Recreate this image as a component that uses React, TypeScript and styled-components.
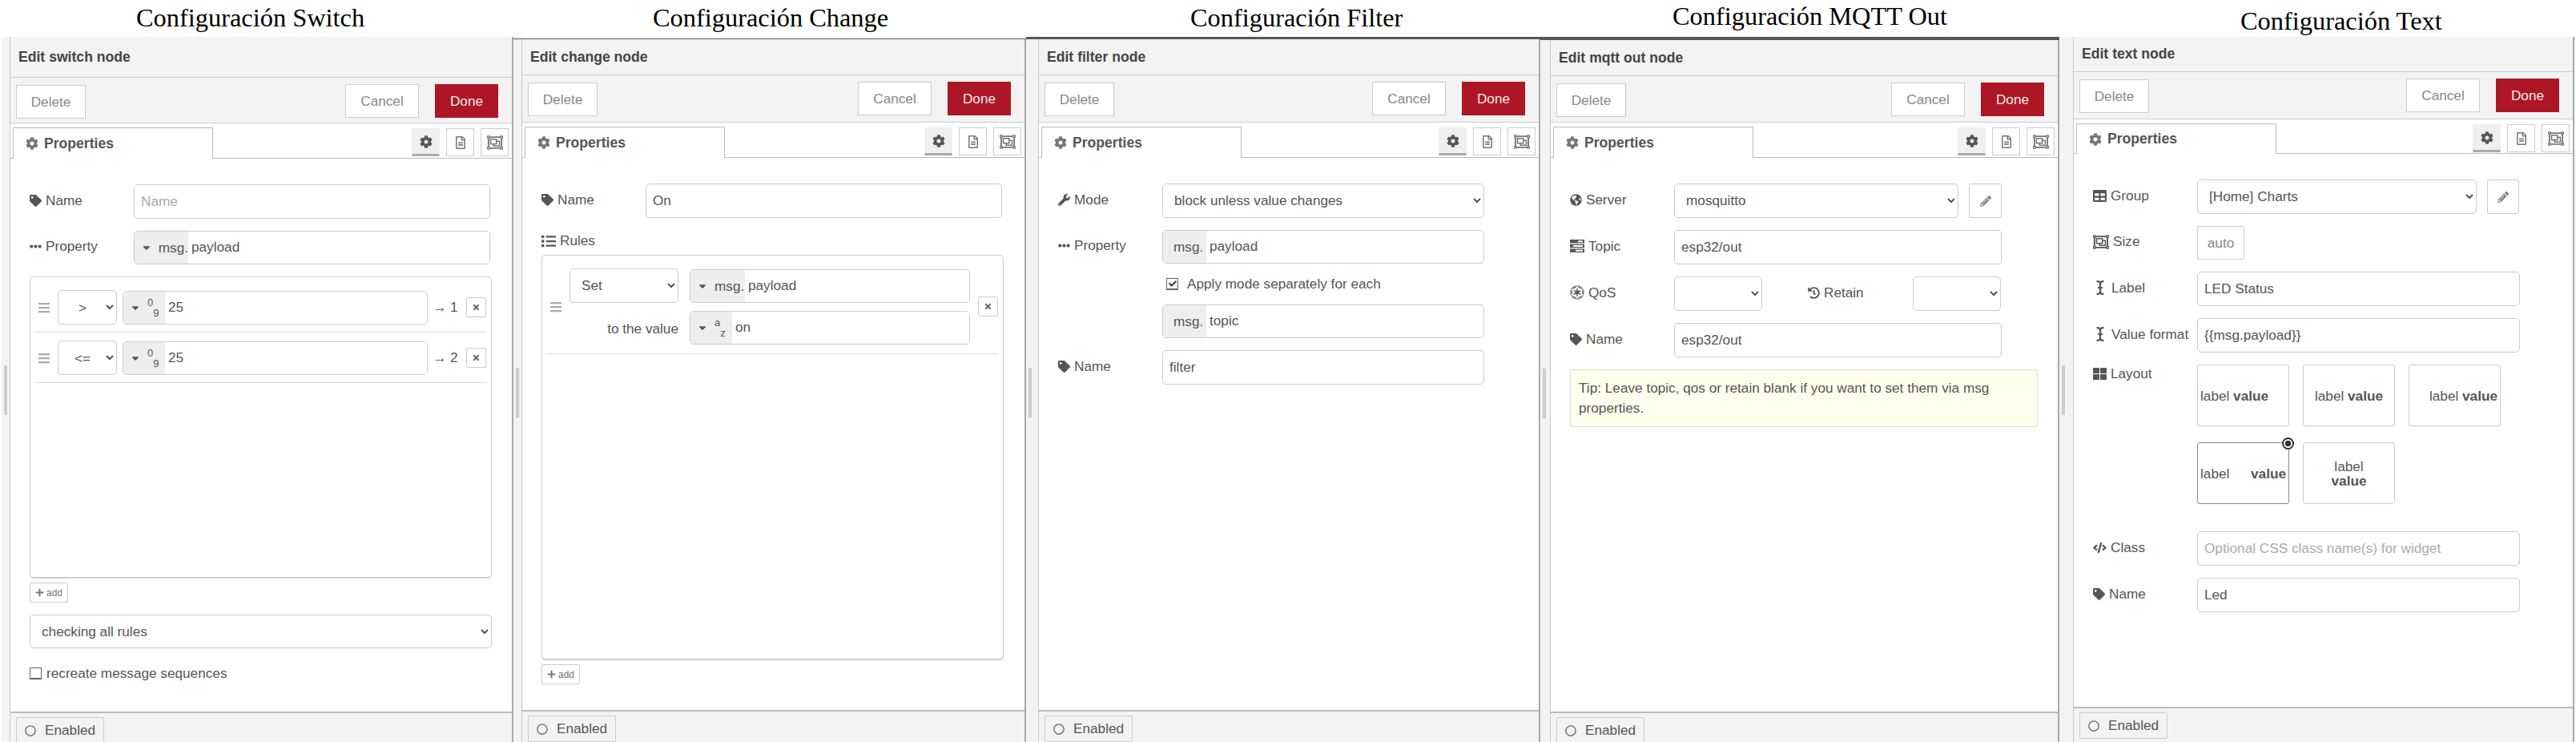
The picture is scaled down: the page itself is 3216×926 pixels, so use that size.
import React from 'react'
import styled, { createGlobalStyle } from 'styled-components'
import {
    FaBars, FaCaretDown, FaCheck, FaCode, FaCog, FaEllipsisH, FaEmpire, FaGlobeAmericas, FaHistory,
    FaICursor, FaList, FaPencilAlt, FaPlus, FaRegCircle, FaRegFileAlt, FaRegObjectGroup, FaTable,
    FaTag, FaThLarge, FaTimes, FaWrench,
} from 'react-icons/fa'

const GlobalStyle = createGlobalStyle`
    html, body {
        margin: 0;
        background: #fff;
        font-family: "Liberation Sans", Arial, sans-serif;
        font-size: 17.2px;
        color: #555;
    }
`

const TasksIcon = () => (
    <svg width="18" height="16" viewBox="0 0 18 16" fill="#555">
        <path d="M0 0h18v4.4H0zM10 1.2v2h6v-2zM0 5.8h18v4.4H0zM4 7v2h12V7zM0 11.6h18V16H0zM7 12.8v2h9v-2z" fillRule="evenodd" />
    </svg>
)

type DialogProps = {
    width: number
    strip: number
    stripWhite?: number
    title: string
    titleLeft: number
    titleTop: number
    titleHeight: number
    line?: number
    node: string
    headerH: number
    toolbarH: number
    tabsH: number
    footerH: number
    children: React.ReactNode
}

const Dialog = ({ width, strip, stripWhite, title, titleLeft, titleTop, titleHeight, line, node, headerH, toolbarH, tabsH, footerH, children }: DialogProps) => (
    <Column $width={width}>
        <TitleBar $height={titleHeight} $line={line || 0} $left={titleLeft} $top={titleTop}>
            <Title>{title}</Title>
        </TitleBar>
        <Window>
            <Strip $width={strip} $white={stripWhite || 0}><Thumb /></Strip>
            <Panel>
                <Header $height={headerH}>Edit {node} node</Header>
                <Toolbar $height={toolbarH}>
                    <DeleteButton>Delete</DeleteButton>
                    <Spacer />
                    <CancelButton>Cancel</CancelButton>
                    <DoneButton>Done</DoneButton>
                </Toolbar>
                <Tabs $height={tabsH}>
                    <Tab><FaCog color="#777" size={16} /> Properties</Tab>
                    <Spacer />
                    <TabIcon $active><FaCog size={16} color="#555" /></TabIcon>
                    <TabIcon><FaRegFileAlt size={16} color="#777" /></TabIcon>
                    <TabIcon><FaRegObjectGroup size={20} color="#777" /></TabIcon>
                </Tabs>
                <Body>{children}</Body>
                <Footer $height={footerH}>
                    <EnabledButton><FaRegCircle size={14} color="#666" /> Enabled</EnabledButton>
                </Footer>
            </Panel>
        </Window>
    </Column>
)

const SwitchRule = ({ op, last }: { op: string; last: number }) => (
    <RuleItem>
        <Handle><FaBars size={16} /></Handle>
        <OpSelect defaultValue={op}><option>{op}</option></OpSelect>
        <Typed $width={381}>
            <TypePrefix $width={52}>
                <FaCaretDown size={14} />
                <TypeGlyph><i>0</i><b>9</b></TypeGlyph>
            </TypePrefix>
            <TypedInput defaultValue="25" />
        </Typed>
        <Output>→ {last}</Output>
        <Spacer />
        <RemoveButton><FaTimes size={11} /></RemoveButton>
    </RuleItem>
)

const MsgTyped = ({ value, caret, width, prefix }: { value: string; caret?: boolean; width?: number; prefix?: number }) => (
    <Typed $width={width || 0}>
        <TypePrefix $width={prefix || 67} $plain={!caret}>
            {caret && <FaCaretDown size={14} />}
            <span>msg.</span>
        </TypePrefix>
        <TypedInput defaultValue={value} />
    </Typed>
)

const App = () => (
    <Page>
        <GlobalStyle />
        <Dialog width={641} strip={12} stripWhite={2} title="Configuración Switch" titleLeft={170} titleTop={3} titleHeight={46} node="switch" headerH={51} toolbarH={57} tabsH={44} footerH={38}>
            <FormRow>
                <Label><FaTag size={15} /> Name</Label>
                <TextInput placeholder="Name" $width={445} />
            </FormRow>
            <FormRow>
                <Label><FaEllipsisH size={15} /> Property</Label>
                <MsgTyped value="payload" caret width={445} />
            </FormRow>
            <RuleBox $height={377}>
                <SwitchRule op=">" last={1} />
                <SwitchRule op="<=" last={2} />
            </RuleBox>
            <AddButton><FaPlus size={11} /> add</AddButton>
            <WideSelect defaultValue="checking all rules"><option>checking all rules</option></WideSelect>
            <CheckRow $margin={21}>
                <CheckBox />
                recreate message sequences
            </CheckRow>
        </Dialog>

        <Dialog width={640} strip={10} title="Configuración Change" titleLeft={174} titleTop={3} titleHeight={48} line={1} node="change" headerH={45} toolbarH={59} tabsH={44} footerH={40}>
            <FormRow>
                <Label><FaTag size={15} /> Name</Label>
                <TextInput defaultValue="On" $width={445} />
            </FormRow>
            <RulesLabel><FaList size={18} /> Rules</RulesLabel>
            <RuleBox $height={506}>
                <ChangeItem>
                    <Handle><FaBars size={16} /></Handle>
                    <ChangeFields>
                        <ChangeLine>
                            <FieldSelect $width={136} defaultValue="Set"><option>Set</option></FieldSelect>
                            <MsgTyped value="payload" caret width={350} prefix={68} />
                        </ChangeLine>
                        <ChangeLine>
                            <ToValue>to the value</ToValue>
                            <Typed $width={350}>
                                <TypePrefix $width={52}>
                                    <FaCaretDown size={14} />
                                    <TypeGlyph><i>a</i><b>z</b></TypeGlyph>
                                </TypePrefix>
                                <TypedInput defaultValue="on" />
                            </Typed>
                        </ChangeLine>
                    </ChangeFields>
                    <Spacer />
                    <RemoveButton><FaTimes size={11} /></RemoveButton>
                </ChangeItem>
            </RuleBox>
            <AddButton><FaPlus size={11} /> add</AddButton>
        </Dialog>

        <Dialog width={642} strip={15} title="Configuración Filter" titleLeft={205} titleTop={3} titleHeight={46} line={3} node="filter" headerH={45} toolbarH={59} tabsH={44} footerH={40}>
            <FormRow>
                <Label><FaWrench size={15} /> Mode</Label>
                <FieldSelect $width={402} defaultValue="block unless value changes"><option>block unless value changes</option></FieldSelect>
            </FormRow>
            <FormRow>
                <Label><FaEllipsisH size={15} /> Property</Label>
                <MsgTyped value="payload" width={402} prefix={54} />
            </FormRow>
            <CheckRow $margin={5} $indent={135}>
                <CheckBox $checked><FaCheck size={10} color="#333" /></CheckBox>
                Apply mode separately for each
            </CheckRow>
            <FormRow $top={15}>
                <Label />
                <MsgTyped value="topic" width={402} prefix={54} />
            </FormRow>
            <FormRow>
                <Label><FaTag size={15} /> Name</Label>
                <TextInput defaultValue="filter" $width={402} />
            </FormRow>
        </Dialog>

        <Dialog width={648} strip={12} title="Configuración MQTT Out" titleLeft={165} titleTop={1} titleHeight={46} line={4} node="mqtt out" headerH={45} toolbarH={58} tabsH={44} footerH={38}>
            <FormRow>
                <Label><FaGlobeAmericas size={15} /> Server</Label>
                <FieldSelect $width={355} defaultValue="mosquitto"><option>mosquitto</option></FieldSelect>
                <PencilButton $width={41}><FaPencilAlt size={14} /></PencilButton>
            </FormRow>
            <FormRow>
                <Label><TasksIcon /> Topic</Label>
                <TextInput defaultValue="esp32/out" $width={409} />
            </FormRow>
            <FormRow>
                <Label><FaEmpire size={18} /> QoS</Label>
                <FieldSelect $width={110}><option></option></FieldSelect>
                <RetainLabel><FaHistory size={15} /> Retain</RetainLabel>
                <FieldSelect $width={110}><option></option></FieldSelect>
            </FormRow>
            <FormRow>
                <Label><FaTag size={15} /> Name</Label>
                <TextInput defaultValue="esp32/out" $width={409} />
            </FormRow>
            <Tip>Tip: Leave topic, qos or retain blank if you want to set them via msg properties.</Tip>
        </Dialog>

        <Dialog width={643} strip={17} title="Configuración Text" titleLeft={226} titleTop={7} titleHeight={46} node="text" headerH={44} toolbarH={59} tabsH={43} footerH={44}>
            <FormRow>
                <Label><FaTable size={17} /> Group</Label>
                <FieldSelect $width={349} defaultValue="[Home] Charts"><option>[Home] Charts</option></FieldSelect>
                <PencilButton $width={40}><FaPencilAlt size={14} /></PencilButton>
            </FormRow>
            <FormRow>
                <Label><FaRegObjectGroup size={20} /> Size</Label>
                <SizeButton>auto</SizeButton>
            </FormRow>
            <FormRow>
                <Label><FaICursor size={18} /> Label</Label>
                <TextInput defaultValue="LED Status" $width={403} />
            </FormRow>
            <FormRow>
                <Label><FaICursor size={18} /> Value format</Label>
                <TextInput defaultValue="{{msg.payload}}" $width={403} />
            </FormRow>
            <LayoutRow>
                <LayoutLabel><FaThLarge size={17} /> Layout</LayoutLabel>
                <LayoutGrid>
                    <LayoutOption $justify="flex-start">label&nbsp;<strong>value</strong></LayoutOption>
                    <LayoutOption $justify="center">label&nbsp;<strong>value</strong></LayoutOption>
                    <LayoutOption $justify="flex-end">label&nbsp;<strong>value</strong></LayoutOption>
                    <LayoutOption $justify="space-between" $selected>
                        <span>label</span><strong>value</strong>
                        <RadioMark />
                    </LayoutOption>
                    <LayoutOption $justify="center" $stack><span>label</span><strong>value</strong></LayoutOption>
                </LayoutGrid>
            </LayoutRow>
            <FormRow>
                <Label><FaCode size={17} /> Class</Label>
                <TextInput placeholder="Optional CSS class name(s) for widget" $width={403} />
            </FormRow>
            <FormRow>
                <Label><FaTag size={15} /> Name</Label>
                <TextInput defaultValue="Led" $width={403} />
            </FormRow>
        </Dialog>
    </Page>
)

const Page = styled.div`
    display: flex;
    width: 3216px;
    height: 926px;
    overflow: hidden;
`

const Column = styled.div<{ $width: number }>`
    display: flex;
    flex-direction: column;
    width: ${p => p.$width}px;
    flex: none;
`

const TitleBar = styled.div<{ $height: number; $line: number; $left: number; $top: number }>`
    box-sizing: content-box;
    height: ${p => p.$height - p.$top}px;
    padding: ${p => p.$top}px 0 0 ${p => p.$left}px;
    border-bottom: ${p => p.$line}px solid #555;
    flex: none;
`

const Title = styled.div`
    font-family: "Liberation Serif", "Times New Roman", serif;
    font-size: 32.4px;
    line-height: 38px;
    color: #000;
    white-space: nowrap;
`

const Window = styled.div`
    display: flex;
    flex: 1;
    min-height: 0;
`

const Strip = styled.div<{ $width: number; $white: number }>`
    box-sizing: border-box;
    width: ${p => p.$width}px;
    flex: none;
    background: #f3f3f3;
    border-left: ${p => p.$white}px solid #fff;
    padding: 410px 0 0 3px;
`

const Thumb = styled.div`
    width: 4px;
    height: 62px;
    background: #ccc;
`

const Panel = styled.div`
    display: flex;
    flex-direction: column;
    flex: 1;
    min-width: 0;
    background: #fff;
    border-left: 1px solid #ccc;
    border-right: 2px solid #aaa;
`

const Header = styled.div<{ $height: number }>`
    box-sizing: border-box;
    height: ${p => p.$height}px;
    padding-left: 10px;
    display: flex;
    align-items: center;
    background: #f3f3f3;
    border-bottom: 1px solid #ccc;
    color: #444;
    font-weight: bold;
    font-size: 17.6px;
    flex: none;
`

const Toolbar = styled.div<{ $height: number }>`
    box-sizing: border-box;
    height: ${p => p.$height}px;
    padding: 8px 17px 0 7px;
    display: flex;
    align-items: flex-start;
    background: #f3f3f3;
    border-bottom: 1px solid #ccc;
    flex: none;
`

const Spacer = styled.div`
    flex: 1;
`

const DeleteButton = styled.div`
    box-sizing: border-box;
    width: 87px;
    height: 42px;
    margin-top: 1px;
    display: flex;
    align-items: center;
    justify-content: center;
    background: #fff;
    border: 1px solid #ccc;
    color: #888;
`

const CancelButton = styled(DeleteButton)`
    width: 92px;
    margin-top: 0;
`

const DoneButton = styled(DeleteButton)`
    width: 79px;
    margin: 0 0 0 20px;
    background: #ad1625;
    border-color: #ad1625;
    color: #eee;
`

const Tabs = styled.div<{ $height: number }>`
    box-sizing: border-box;
    height: ${p => p.$height}px;
    padding: 5px 4px 0 3px;
    display: flex;
    align-items: flex-start;
    gap: 8px;
    border-bottom: 1px solid #bbb;
    flex: none;
`

const Tab = styled.div`
    box-sizing: border-box;
    width: 250px;
    height: calc(100% + 1px);
    padding-left: 15px;
    display: flex;
    align-items: center;
    gap: 7px;
    background: #fff;
    border: 1px solid #bbb;
    border-bottom: none;
    font-weight: bold;
    font-size: 17.6px;
`

const TabIcon = styled.div<{ $active?: boolean }>`
    box-sizing: border-box;
    width: 35px;
    height: 35px;
    margin-top: 1px;
    display: flex;
    align-items: center;
    justify-content: center;
    background: ${p => (p.$active ? '#efefef' : '#fff')};
    border: 1px solid ${p => (p.$active ? '#efefef' : '#ccc')};
    border-bottom: ${p => (p.$active ? '3px solid #aaa' : '1px solid #ccc')};
`

const Body = styled.div`
    flex: 1;
    min-height: 0;
    padding: 32px 0 0 24px;
`

const Footer = styled.div<{ $height: number }>`
    box-sizing: border-box;
    height: ${p => p.$height}px;
    padding: 5px 0 0 7px;
    background: #f3f3f3;
    border-top: 2px solid #bbb;
    flex: none;
`

const EnabledButton = styled.div`
    box-sizing: border-box;
    width: 110px;
    height: 33px;
    padding-left: 10px;
    display: flex;
    align-items: center;
    gap: 11px;
    background: #f3f3f3;
    border: 1px solid #ccc;
    border-radius: 2px;
`

const FormRow = styled.div<{ $top?: number }>`
    display: flex;
    align-items: center;
    margin: ${p => p.$top || 0}px 0 15px;
`

const Label = styled.div`
    width: 130px;
    flex: none;
    display: flex;
    align-items: center;
    gap: 5px;
    white-space: nowrap;
    margin-bottom: 3px;
`

const RetainLabel = styled(Label)`
    width: 131px;
    margin-left: 57px;
`

const RulesLabel = styled(Label)`
    height: 27px;
    margin: 0 0 4px;
`

const TextInput = styled.input<{ $width: number }>`
    box-sizing: border-box;
    width: ${p => p.$width}px;
    height: 43px;
    padding: 0 8px 1px;
    border: 1px solid #ccc;
    border-radius: 5px;
    outline: none;
    font: inherit;
    color: #555;
    &::placeholder {
        color: #aaa;
    }
`

const FieldSelect = styled.select<{ $width: number }>`
    box-sizing: border-box;
    width: ${p => p.$width}px;
    height: 43px;
    padding: 0 0 1px 10px;
    background: #fff;
    border: 1px solid #ccc;
    border-radius: 5px;
    outline: none;
    font: inherit;
    color: #555;
    flex: none;
`

const OpSelect = styled(FieldSelect).attrs({ $width: 74 })`
    padding: 0;
    margin-right: 7px;
    text-align: center;
`

const WideSelect = styled(FieldSelect).attrs({ $width: 577 })`
    display: block;
    height: 42px;
    margin-top: 15px;
`

const PencilButton = styled.div<{ $width: number }>`
    box-sizing: border-box;
    width: ${p => p.$width}px;
    height: 43px;
    margin-left: 13px;
    display: flex;
    align-items: center;
    justify-content: center;
    border: 1px solid #ccc;
    border-radius: 2px;
    color: #888;
`

const SizeButton = styled.div`
    box-sizing: border-box;
    width: 59px;
    height: 42px;
    display: flex;
    align-items: center;
    justify-content: center;
    border: 1px solid #ccc;
    border-radius: 2px;
    color: #888;
`

const Typed = styled.div<{ $width: number }>`
    box-sizing: border-box;
    width: ${p => p.$width}px;
    height: 42px;
    display: flex;
    flex: none;
    border: 1px solid #ccc;
    border-radius: 5px;
    overflow: hidden;
`

const TypePrefix = styled.div<{ $width: number; $plain?: boolean }>`
    box-sizing: border-box;
    width: ${p => p.$width}px;
    flex: none;
    padding-left: ${p => (p.$plain ? 13 : 8)}px;
    display: flex;
    align-items: center;
    gap: 8px;
    background: #eee;
`

const TypeGlyph = styled.span`
    display: flex;
    width: 15px;
    height: 26px;
    font-size: 13px;
    line-height: 13px;
    i {
        font-style: normal;
        align-self: flex-start;
    }
    b {
        font-weight: normal;
        align-self: flex-end;
    }
`

const TypedInput = styled.input`
    flex: 1;
    min-width: 0;
    padding: 0 4px 1px;
    border: none;
    outline: none;
    font: inherit;
    color: #555;
`

const RuleBox = styled.div<{ $height: number }>`
    box-sizing: border-box;
    width: 577px;
    height: ${p => p.$height}px;
    padding: 0 6px;
    border: 1px solid #ccc;
    border-bottom: 2px solid #ccc;
    border-radius: 5px;
`

const RuleItem = styled.div`
    box-sizing: border-box;
    padding: 10px 0 9px;
    display: flex;
    align-items: center;
    border-bottom: 1px solid #ddd;
    &:first-child {
        padding-top: 16px;
    }
`

const ChangeItem = styled.div`
    box-sizing: border-box;
    padding: 16px 0 11px;
    display: flex;
    align-items: center;
    border-bottom: 1px solid #ddd;
`

const ChangeFields = styled.div`
    display: flex;
    flex-direction: column;
    gap: 10px;
`

const ChangeLine = styled.div`
    display: flex;
    align-items: flex-end;
    gap: 14px;
`

const ToValue = styled.div`
    width: 136px;
    padding-bottom: 9px;
    text-align: right;
    white-space: nowrap;
`

const Handle = styled.div`
    width: 28px;
    padding-left: 3px;
    box-sizing: border-box;
    flex: none;
    display: flex;
    color: #aaa;
`

const Output = styled.div`
    margin-left: 6px;
    white-space: nowrap;
`

const RemoveButton = styled.div`
    box-sizing: border-box;
    width: 25px;
    height: 25px;
    flex: none;
    display: flex;
    align-items: center;
    justify-content: center;
    border: 1px solid #ccc;
    border-radius: 2px;
    color: #666;
`

const AddButton = styled.div`
    box-sizing: border-box;
    width: 48px;
    height: 25px;
    margin-top: 5px;
    display: flex;
    align-items: center;
    justify-content: center;
    gap: 3px;
    border: 1px solid #ccc;
    border-radius: 2px;
    color: #777;
    font-size: 12px;
`

const CheckRow = styled.div<{ $margin: number; $indent?: number }>`
    display: flex;
    align-items: center;
    gap: 6px;
    margin: ${p => p.$margin}px 0 0 ${p => p.$indent || 0}px;
`

const CheckBox = styled.span<{ $checked?: boolean }>`
    box-sizing: border-box;
    width: 15px;
    height: 15px;
    display: flex;
    align-items: center;
    justify-content: center;
    margin-right: ${p => (p.$checked ? 5 : 0)}px;
    border: 1px solid #666;
    border-bottom-width: 2px;
    background: #fff;
`

const Tip = styled.div`
    box-sizing: border-box;
    width: 584px;
    height: 72px;
    padding: 10px;
    background: #ffffee;
    border: 1px solid #ddd;
    border-radius: 2px;
    line-height: 25px;
`

const LayoutRow = styled.div`
    display: flex;
    align-items: flex-start;
    margin-bottom: 34px;
`

const LayoutLabel = styled(Label)`
    margin-top: 1px;
`

const LayoutGrid = styled.div`
    display: grid;
    grid-template-columns: repeat(3, 115px);
    grid-auto-rows: 77px;
    column-gap: 17px;
    row-gap: 20px;
`

const LayoutOption = styled.div<{ $justify: string; $selected?: boolean; $stack?: boolean }>`
    box-sizing: border-box;
    position: relative;
    padding: 0 3px;
    display: flex;
    flex-direction: ${p => (p.$stack ? 'column' : 'row')};
    align-items: center;
    justify-content: ${p => p.$justify};
    line-height: 18px;
    border: 1px solid ${p => (p.$selected ? '#888' : '#ccc')};
    border-radius: 3px;
`

const RadioMark = styled.span`
    position: absolute;
    top: -7px;
    right: -7px;
    box-sizing: border-box;
    width: 15px;
    height: 15px;
    border: 2px solid #333;
    border-radius: 50%;
    background: radial-gradient(circle, #333 0 3.5px, #fff 4px);
`

export default App
